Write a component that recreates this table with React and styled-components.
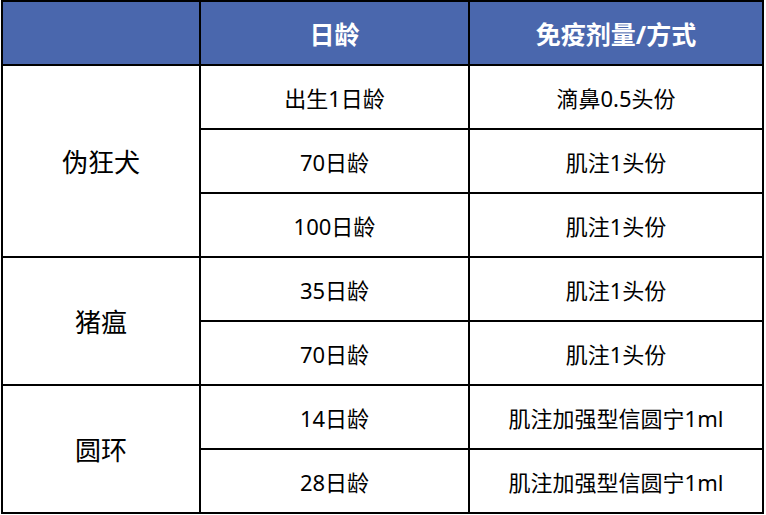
import React from "react"
import styled, { createGlobalStyle } from "styled-components"

const GlobalStyle = createGlobalStyle`
  html, body {
    margin: 0;
    padding: 0;
    background: #ffffff;
  }
  body {
    font-family: "Noto Sans", "Noto Sans CJK SC", sans-serif;
  }
`

const Grid = styled.div`
  display: grid;
  grid-template-columns: 196px 267px 292px;
  grid-auto-rows: 62px;
  gap: 2px;
  padding: 2px;
  width: max-content;
  margin-left: 1px;
  background: #000000;
`

const HeadCell = styled.div`
  display: flex;
  align-items: center;
  justify-content: center;
  background: #4a67ad;
  color: #ffffff;
  font-weight: 700;
  font-size: 25px;
`

const Cell = styled.div`
  display: flex;
  align-items: center;
  justify-content: center;
  background: #ffffff;
  color: #000000;
  font-size: ${(p) => (p.$big ? "26px" : "22px")};
  grid-row: ${(p) => (p.$span ? `span ${p.$span}` : "auto")};
`

const groups = [
  {
    name: "伪狂犬",
    rows: [
      ["出生1日龄", "滴鼻0.5头份"],
      ["70日龄", "肌注1头份"],
      ["100日龄", "肌注1头份"],
    ],
  },
  {
    name: "猪瘟",
    rows: [
      ["35日龄", "肌注1头份"],
      ["70日龄", "肌注1头份"],
    ],
  },
  {
    name: "圆环",
    rows: [
      ["14日龄", "肌注加强型信圆宁1ml"],
      ["28日龄", "肌注加强型信圆宁1ml"],
    ],
  },
]

const App = () => {
  return (
    <>
      <GlobalStyle />
      <Grid>
        <HeadCell />
        <HeadCell>日龄</HeadCell>
        <HeadCell>免疫剂量/方式</HeadCell>
        {groups.map((g) =>
          g.rows.map((r, i) => (
            <React.Fragment key={g.name + i}>
              {i === 0 && (
                <Cell $big $span={g.rows.length}>
                  {g.name}
                </Cell>
              )}
              <Cell>{r[0]}</Cell>
              <Cell>{r[1]}</Cell>
            </React.Fragment>
          ))
        )}
      </Grid>
    </>
  )
}

export default App
